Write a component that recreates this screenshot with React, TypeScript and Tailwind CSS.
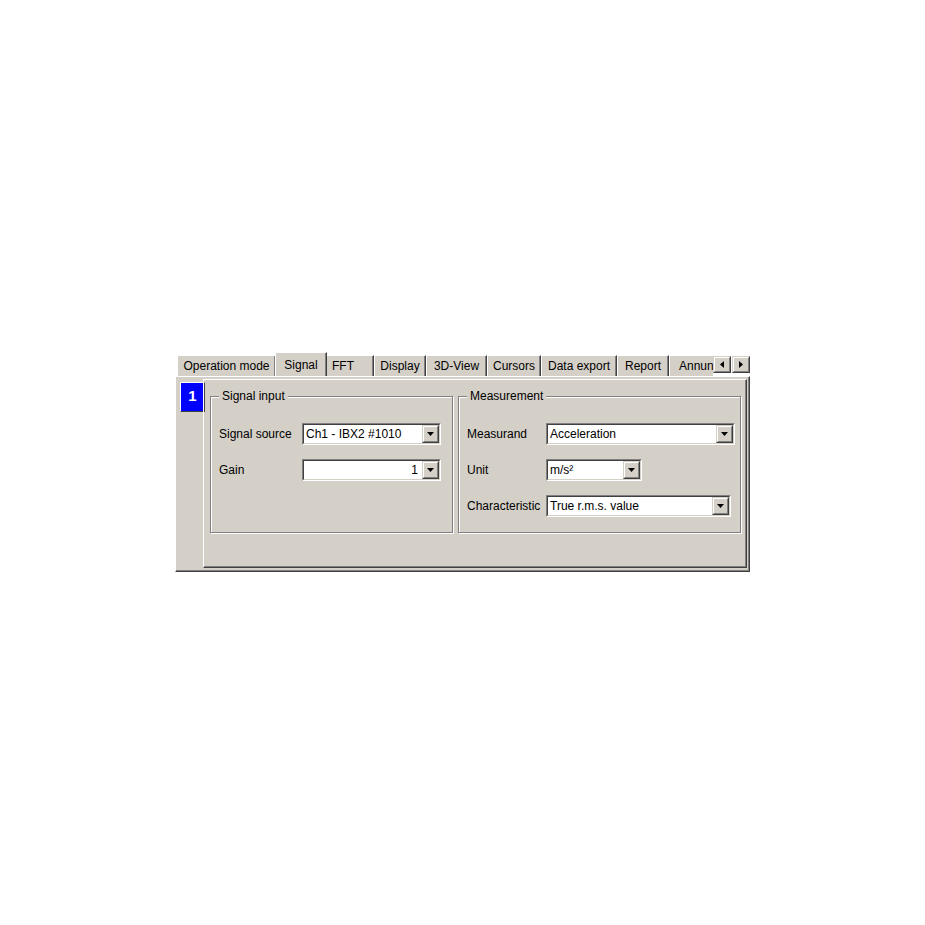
import React from 'react';

const tabs = [
  { label: 'Operation mode', w: 'w-[99px]' },
  { label: 'Signal', w: 'w-[52px]', active: true },
  { label: 'FFT', w: 'w-[48px]', left: true },
  { label: 'Display', w: 'w-[52px]' },
  { label: '3D-View', w: 'w-[61px]' },
  { label: 'Cursors', w: 'w-[54px]' },
  { label: 'Data export', w: 'w-[76px]' },
  { label: 'Report', w: 'w-[52px]' },
  { label: 'Annunciators', w: 'w-[90px]' },
];

const Arrow: React.FC<{ dir: 'left' | 'right' | 'down' }> = ({ dir }) => {
  if (dir === 'down') {
    return (
      <svg width="7" height="4" viewBox="0 0 7 4">
        <path d="M0 0H7L3.5 4Z" fill="#000" />
      </svg>
    );
  }
  return (
    <svg width="4" height="7" viewBox="0 0 4 7">
      <path d={dir === 'left' ? 'M4 0V7L0 3.5Z' : 'M0 0V7L4 3.5Z'} fill="#000" />
    </svg>
  );
};

// classic raised 3d button face
const RaisedBtn: React.FC<{ className?: string; children: React.ReactNode }> = ({ className = '', children }) => (
  <div className={`border border-t-[#d4d0c8] border-l-[#d4d0c8] border-r-[#404040] border-b-[#404040] ${className}`}>
    <div className="w-full h-full border border-t-white border-l-white border-r-[#808080] border-b-[#808080] bg-[#d4d0c8] flex items-center justify-center">
      {children}
    </div>
  </div>
);

const Combo: React.FC<{ w: string; value: string; right?: boolean }> = ({ w, value, right }) => (
  <div className={`${w} h-[22px] border border-t-[#808080] border-l-[#808080] border-r-white border-b-white`}>
    <div className="w-full h-full border border-t-[#404040] border-l-[#404040] border-r-[#d4d0c8] border-b-[#d4d0c8] bg-white flex">
      <div className={`flex-1 flex items-center px-[2px] ${right ? 'justify-end pr-[4px]' : ''}`}>{value}</div>
      <RaisedBtn className="w-[17px] h-full">
        <Arrow dir="down" />
      </RaisedBtn>
    </div>
  </div>
);

const Group: React.FC<{ title: string; w: string; children: React.ReactNode }> = ({ title, w, children }) => (
  <div className={`relative ${w} h-[137px] border border-[#808080] shadow-[1px_1px_0_#fff,inset_1px_1px_0_#fff]`}>
    <div className="absolute -top-[8px] left-[8px] px-[3px] bg-[#d4d0c8] leading-[14px]">{title}</div>
    <div className="pt-[26px] pl-[8px] flex flex-col gap-[14px]">{children}</div>
  </div>
);

const Row: React.FC<{ label: string; lw: string; children: React.ReactNode }> = ({ label, lw, children }) => (
  <div className="flex items-center h-[22px]">
    <div className={`${lw} shrink-0`}>{label}</div>
    {children}
  </div>
);

export default function App() {
  return (
    <div className="w-[925px] h-[925px] bg-white pt-[352px] pl-[175px] text-[12px] text-black font-['Liberation_Sans',Arial,sans-serif]">
      <div className="w-[575px]">
        {/* tab strip */}
        <div className="h-[24px] flex items-end">
          <div className="flex-1 h-full flex items-end pl-[2px] overflow-hidden">
            {tabs.map((t) =>
              t.active ? (
                <div
                  key={t.label}
                  className={`${t.w} shrink-0 relative z-10 h-[25px] -mb-[1px] -mx-[1px] bg-[#d4d0c8] border-l border-t border-r border-l-white border-t-white border-r-[#404040] shadow-[inset_-1px_0_0_#808080] rounded-tl-[2px] flex justify-center pt-[3px]`}
                >
                  {t.label}
                </div>
              ) : (
                <div
                  key={t.label}
                  className={`${t.w} shrink-0 h-[21px] bg-[#d4d0c8] border-l border-t border-r border-l-white border-t-white border-r-[#404040] shadow-[inset_-1px_0_0_#808080] rounded-tl-[2px] flex items-center ${t.left ? 'pl-[5px]' : 'justify-center'}`}
                >
                  <span className="whitespace-nowrap">{t.label}</span>
                </div>
              )
            )}
          </div>
          <div className="flex shrink-0 mb-[3px] gap-[1px]">
            <RaisedBtn className="w-[18px] h-[17px]">
              <Arrow dir="left" />
            </RaisedBtn>
            <RaisedBtn className="w-[18px] h-[17px]">
              <Arrow dir="right" />
            </RaisedBtn>
          </div>
        </div>

        {/* tab page */}
        <div className="h-[196px] bg-[#d4d0c8] border border-t-white border-l-white border-r-[#404040] border-b-[#404040] shadow-[inset_-1px_-1px_0_#808080] flex pt-[2px] pr-[2px] pb-[3px]">
          <div className="w-[27px] shrink-0 pl-[4px] pt-[3px]">
            <div className="w-[25px] h-[30px] bg-[#0000ff] border border-t-white border-l-white border-r-[#404040] border-b-[#404040] text-white font-bold text-[15px] flex justify-center pt-[5px] leading-[16px]">
              1
            </div>
          </div>
          <div className="flex-1 border border-t-white border-l-white border-r-[#404040] border-b-[#404040] shadow-[inset_-1px_-1px_0_#808080] pt-[16px] pl-[6px] flex gap-[5px]">
            <Group title="Signal input" w="w-[243px]">
              <Row label="Signal source" lw="w-[83px]">
                <Combo w="w-[139px]" value="Ch1 - IBX2 #1010" />
              </Row>
              <Row label="Gain" lw="w-[83px]">
                <Combo w="w-[139px]" value="1" right />
              </Row>
            </Group>
            <Group title="Measurement" w="w-[283px]">
              <Row label="Measurand" lw="w-[79px]">
                <Combo w="w-[189px]" value="Acceleration" />
              </Row>
              <Row label="Unit" lw="w-[79px]">
                <Combo w="w-[96px]" value="m/s²" />
              </Row>
              <Row label="Characteristic" lw="w-[79px]">
                <Combo w="w-[185px]" value="True r.m.s. value" />
              </Row>
            </Group>
          </div>
        </div>
      </div>
    </div>
  );
}
